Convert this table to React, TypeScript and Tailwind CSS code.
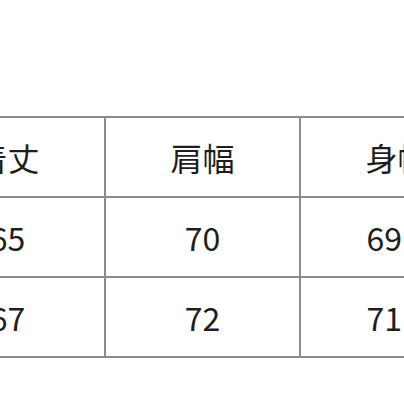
export default function App() {
  const rows = [
    ["着丈", "肩幅", "身幅"],
    ["65", "70", "69.5"],
    ["67", "72", "71.5"],
  ];

  return (
    <div className="w-[404px] h-[404px] overflow-hidden bg-white" style={{ fontFamily: '"Noto Sans CJK JP", "Noto Sans", sans-serif' }}>
      <div className="pt-[116px]">
        <div className="ml-[-89px] w-[585px] border-t-2 border-[#8c8c8c]">
          {rows.map((row, i) => (
            <div key={i} className="grid grid-cols-[195px_195px_195px]">
              {row.map((cell, j) => (
                <div
                  key={j}
                  className="h-[80px] border-r-2 border-b-2 border-[#8c8c8c] flex items-center justify-center text-[32px] leading-none text-[#1e1e1e]"
                >
                  {cell}
                </div>
              ))}
            </div>
          ))}
        </div>
        <div className="mt-[46px] h-px bg-[#e2e2e2]" />
      </div>
    </div>
  );
}
